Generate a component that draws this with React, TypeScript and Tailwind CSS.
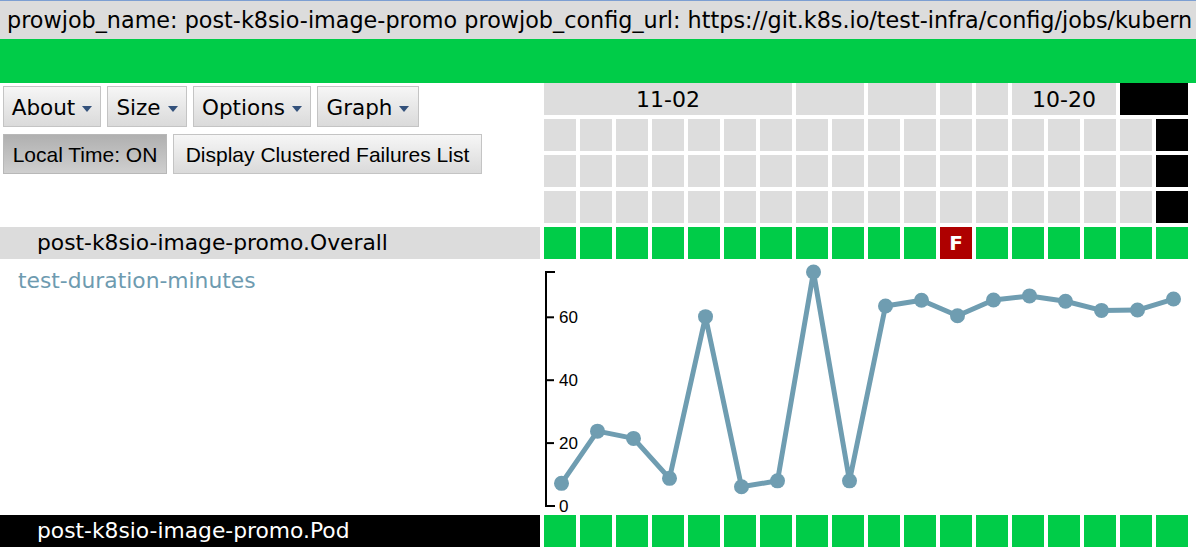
const GREEN = 'bg-[#00cc48]'

const headerSpans = [
  { cls: 'col-span-7 bg-[#dddddd]', label: '11-02' },
  { cls: 'col-span-2 bg-[#dddddd]', label: '' },
  { cls: 'col-span-2 bg-[#dddddd]', label: '' },
  { cls: 'col-span-1 bg-[#dddddd]', label: '' },
  { cls: 'col-span-1 bg-[#dddddd]', label: '' },
  { cls: 'col-span-3 bg-[#dddddd]', label: '10-20' },
  { cls: 'col-span-2 bg-black', label: '' },
]

const durations = [7.2, 23.8, 21.5, 8.8, 60.2, 6.1, 8.0, 74.4, 8.0, 63.6, 65.4, 60.5, 65.5, 66.8, 65.1, 62.2, 62.3, 65.8]

function Caret() {
  return (
    <svg width="10" height="6" viewBox="0 0 10 6" className="mt-[1px]">
      <path d="M0 0 H10 L5 6 Z" fill="#34527c" />
    </svg>
  )
}

function MenuButton({ label, w }: { label: string; w: string }) {
  return (
    <div
      className={`${w} h-[41px] pt-[3px] flex items-center justify-center gap-[7px] border border-[#c4c4c4] bg-gradient-to-b from-[#f6f6f6] to-[#dadada] text-[21.5px] text-black`}
    >
      {label}
      <Caret />
    </div>
  )
}

function Chart() {
  const y = (v: number) => 243 - v * 3.145
  const pts = durations.map((v, i) => [17.5 + 36 * i, y(v)])
  const d = pts.map((p, i) => `${i ? 'L' : 'M'}${p[0]},${p[1]}`).join(' ')
  const ticks = [0, 20, 40, 60]
  return (
    <svg width="644" height="248" className="overflow-visible">
      <path d={`M11,${y(74.4)} H2 V243 H11`} fill="none" stroke="black" strokeWidth="2" />
      {ticks.map((t) => (
        <g key={t}>
          <line x1="2" x2="10" y1={y(t)} y2={y(t)} stroke="black" strokeWidth="2" />
          <text
            x="15"
            y={y(t)}
            dy="0.36em"
            fontSize="17"
            fontFamily="'Liberation Sans', Arial, sans-serif"
            fill="black"
          >
            {t}
          </text>
        </g>
      ))}
      <path d={d} fill="none" stroke="#6f9db1" strokeWidth="5" strokeLinejoin="round" />
      {pts.map((p, i) => (
        <circle key={i} cx={p[0]} cy={p[1]} r="7.5" fill="#6f9db1" />
      ))}
    </svg>
  )
}

export default function App() {
  return (
    <div className="w-[1196px] h-[560px] overflow-hidden bg-white text-black [font-family:'DejaVu_Sans',Verdana,sans-serif]">
      <div className="h-[39px] border-t border-[#7d9fd2] bg-[#dcdcdc] pl-[7px] text-[22.3px] leading-[38px] whitespace-nowrap overflow-hidden">
        prowjob_name: post-k8sio-image-promo prowjob_config_url: https://git.k8s.io/test-infra/config/jobs/kubern
      </div>
      <div className={`h-[44px] ${GREEN}`} />

      <div className="flex flex-col gap-[4px]">
        <div className="flex gap-[4px]">
          <div className="w-[540px] pt-[3px] pl-[3px] flex flex-col gap-[7px]">
            <div className="flex gap-[6px]">
              <MenuButton label="About" w="w-[98px]" />
              <MenuButton label="Size" w="w-[80px]" />
              <MenuButton label="Options" w="w-[118px]" />
              <MenuButton label="Graph" w="w-[102px]" />
            </div>
            <div className="flex gap-[6px] text-[21px] [font-family:'Liberation_Sans',Arial,sans-serif]">
              <div className="w-[164px] h-[40px] pt-[2px] flex items-center justify-center border border-[#b8b8b8] bg-gradient-to-b from-[#b0b0b0] to-[#cfcfcf]">
                Local Time: ON
              </div>
              <div className="w-[309px] h-[40px] pt-[2px] flex items-center justify-center border border-[#c4c4c4] bg-gradient-to-b from-[#f6f6f6] to-[#dadada]">
                Display Clustered Failures List
              </div>
            </div>
          </div>
          <div className="grid grid-cols-[repeat(18,32px)] auto-rows-[32px] gap-[4px]">
            {headerSpans.map((h, i) => (
              <div key={i} className={`${h.cls} flex items-center justify-center text-[22px]`}>
                {h.label}
              </div>
            ))}
            {[0, 1, 2].map((r) =>
              Array.from({ length: 18 }).map((_, c) => (
                <div key={`${r}-${c}`} className={c === 17 ? 'bg-black' : 'bg-[#dddddd]'} />
              ))
            )}
          </div>
        </div>

        <div className="flex gap-[4px] h-[32px]">
          <div className="w-[540px] bg-[#dcdcdc] pl-[37px] text-[21.8px] leading-[32px]">post-k8sio-image-promo.Overall</div>
          <div className="grid grid-cols-[repeat(18,32px)] gap-[4px]">
            {Array.from({ length: 18 }).map((_, c) =>
              c === 11 ? (
                <div key={c} className="bg-[#ae0000] text-white font-bold text-[20px] flex items-center justify-center">
                  F
                </div>
              ) : (
                <div key={c} className={GREEN} />
              )
            )}
          </div>
        </div>

        <div className="flex gap-[4px] h-[248px]">
          <div className="w-[540px] pl-[18px] pt-[2px] text-[21.8px] text-[#6e9bb0]">test-duration-minutes</div>
          <Chart />
        </div>

        <div className="flex gap-[4px] h-[32px]">
          <div className="w-[540px] bg-black text-white pl-[37px] text-[21.8px] leading-[32px]">post-k8sio-image-promo.Pod</div>
          <div className="grid grid-cols-[repeat(18,32px)] gap-[4px]">
            {Array.from({ length: 18 }).map((_, c) => (
              <div key={c} className={GREEN} />
            ))}
          </div>
        </div>
      </div>
    </div>
  )
}
